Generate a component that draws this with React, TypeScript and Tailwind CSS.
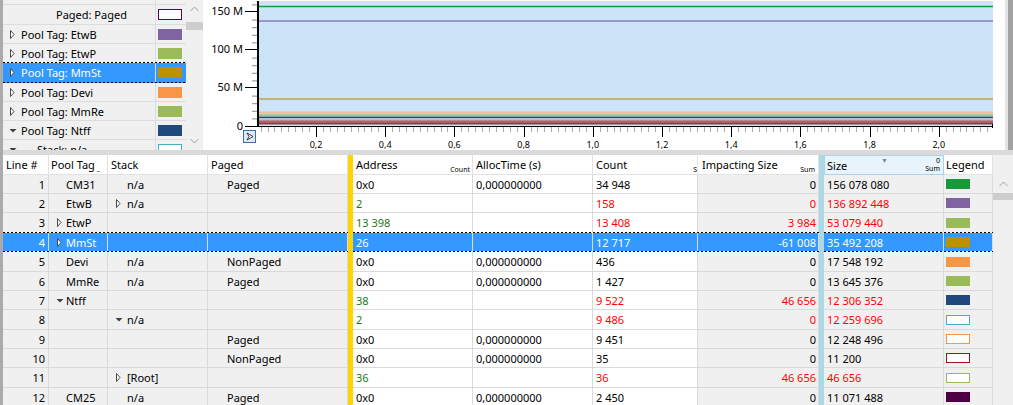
import React from 'react';

type Icon = 'c' | 'e' | undefined;

interface Row {
  n: number;
  h: 19 | 20;
  tag?: string;
  tagIcon?: Icon;
  stack?: string;
  stackIcon?: Icon;
  paged?: string;
  addr: string;
  addrG?: boolean;
  alloc?: string;
  count: string;
  countR?: boolean;
  imp: string;
  impR?: boolean;
  size: string;
  sizeR?: boolean;
  legend: string;
  outline?: boolean;
  sel?: boolean;
}

const rows: Row[] = [
  { n: 1, h: 19, tag: 'CM31', stack: 'n/a', paged: 'Paged', addr: '0x0', alloc: '0,000000000', count: '34 948', imp: '0', size: '156 078 080', legend: '#17993a' },
  { n: 2, h: 19, tag: 'EtwB', stack: 'n/a', stackIcon: 'c', addr: '2', addrG: true, count: '158', countR: true, imp: '0', impR: true, size: '136 892 448', sizeR: true, legend: '#8064a2' },
  { n: 3, h: 20, tag: 'EtwP', tagIcon: 'c', addr: '13 398', addrG: true, count: '13 408', countR: true, imp: '3 984', impR: true, size: '53 079 440', sizeR: true, legend: '#9bbb59' },
  { n: 4, h: 19, tag: 'MmSt', tagIcon: 'c', addr: '26', count: '12 717', imp: '-61 008', size: '35 492 208', legend: '#bf8f00', sel: true },
  { n: 5, h: 20, tag: 'Devi', stack: 'n/a', paged: 'NonPaged', addr: '0x0', alloc: '0,000000000', count: '436', imp: '0', size: '17 548 192', legend: '#f79646' },
  { n: 6, h: 19, tag: 'MmRe', stack: 'n/a', paged: 'Paged', addr: '0x0', alloc: '0,000000000', count: '1 427', imp: '0', size: '13 645 376', legend: '#9bbb59' },
  { n: 7, h: 19, tag: 'Ntff', tagIcon: 'e', addr: '38', addrG: true, count: '9 522', countR: true, imp: '46 656', impR: true, size: '12 306 352', sizeR: true, legend: '#1f497d' },
  { n: 8, h: 20, stack: 'n/a', stackIcon: 'e', addr: '2', addrG: true, count: '9 486', countR: true, imp: '0', impR: true, size: '12 259 696', sizeR: true, legend: '#4bacc6', outline: true },
  { n: 9, h: 19, paged: 'Paged', addr: '0x0', alloc: '0,000000000', count: '9 451', imp: '0', size: '12 248 496', legend: '#f79646', outline: true },
  { n: 10, h: 19, paged: 'NonPaged', addr: '0x0', alloc: '0,000000000', count: '35', imp: '0', size: '11 200', legend: '#a31515', outline: true },
  { n: 11, h: 20, stack: '[Root]', stackIcon: 'c', addr: '36', addrG: true, count: '36', countR: true, imp: '46 656', impR: true, size: '46 656', sizeR: true, legend: '#9bbb59', outline: true },
  { n: 12, h: 19, tag: 'CM25', stack: 'n/a', paged: 'Paged', addr: '0x0', alloc: '0,000000000', count: '2 450', imp: '0', size: '11 071 488', legend: '#4d0044' },
];

interface TreeRow {
  h: number;
  text?: string;
  icon?: Icon;
  pad?: string;
  sw?: string;
  outline?: boolean;
  sel?: boolean;
}

const treeRows: TreeRow[] = [
  { h: 5 },
  { h: 20, text: 'Paged: Paged', pad: 'pl-[50px]', sw: '#4d0a4d', outline: true },
  { h: 19, text: 'Pool Tag: EtwB', icon: 'c', sw: '#8064a2' },
  { h: 19, text: 'Pool Tag: EtwP', icon: 'c', sw: '#9bbb59' },
  { h: 20, text: 'Pool Tag: MmSt', icon: 'c', sw: '#bf8f00', sel: true },
  { h: 19, text: 'Pool Tag: Devi', icon: 'c', sw: '#f79646' },
  { h: 19, text: 'Pool Tag: MmRe', icon: 'c', sw: '#9bbb59' },
  { h: 19, text: 'Pool Tag: Ntff', icon: 'e', sw: '#1f497d' },
  { h: 19, text: 'Stack: n/a', icon: 'e', pad: 'pl-[6px]', sw: '#4bacc6', outline: true },
];

// little tree toggles
const Toggle = ({ kind }: { kind: Icon }) => (
  <span className="w-[9px] h-[9px] shrink-0 flex items-center">
    {kind === 'c' && (
      <svg width="9" height="9" viewBox="0 0 9 9">
        <path d="M1.5 0.5 L5 4.5 L1.5 8.5 Z" fill="#fff" stroke="#4a4a4a" strokeWidth="1" />
      </svg>
    )}
    {kind === 'e' && (
      <svg width="9" height="9" viewBox="0 0 9 9">
        <path d="M0.5 3 H7.5 L4 6.5 Z" fill="#404040" />
      </svg>
    )}
  </span>
);

const Dashed = () => <div className="h-px bg-[repeating-linear-gradient(90deg,#000_0_2px,transparent_2px_4px)]" />;

const Chevron = ({ up }: { up?: boolean }) => (
  <svg width="9" height="6" viewBox="0 0 9 6">
    <path d={up ? 'M0.5 5 L4.5 1 L8.5 5' : 'M0.5 1 L4.5 5 L8.5 1'} fill="none" stroke="#a0a0a0" strokeWidth="1" />
  </svg>
);

const Tree = () => (
  <div className="w-[183px] h-[150px] overflow-hidden bg-[#f0f0f0]">
    {treeRows.map((r, i) => {
      const nextSel = treeRows[i + 1]?.sel;
      return (
        <div key={i} className={r.sel ? 'bg-[#3399ff] text-white' : ''}>
          <div className="flex" style={{ height: r.h - 1 }}>
            <div className={`w-[153px] border-r border-[#dcdcdc] flex items-center ${r.pad ?? 'pl-[6px]'}`}>
              {r.icon && <Toggle kind={r.icon} />}
              {r.text && <span className={`${r.icon === 'e' && r.text.startsWith('Stack') ? 'ml-[19px]' : 'ml-[3px]'} whitespace-nowrap`}>{r.text}</span>}
            </div>
            <div className="w-[30px] flex items-center pl-[2px]">
              {r.sw && (
                <div
                  className={`w-[24px] h-[11px] ${r.outline ? 'border border-current bg-white' : ''}`}
                  style={r.outline ? { color: r.sw } : { background: r.sw }}
                />
              )}
            </div>
          </div>
          {r.sel || nextSel ? <Dashed /> : <div className="h-px bg-[#dcdcdc]" />}
        </div>
      );
    })}
  </div>
);

const chartLines = [
  { y: 6.5, c: '#179a37', w: 1.5 },
  { y: 21, c: '#8a7fb5', w: 1.5 },
  { y: 99, c: '#c4a24e', w: 1.5 },
  { y: 112.5, c: '#f1b994', w: 2 },
  { y: 114.5, c: '#a7c98f', w: 1 },
  { y: 116, c: '#6f94ad', w: 1 },
  { y: 117.3, c: '#2b4a78', w: 1.2 },
  { y: 119, c: '#9f93c7', w: 1 },
  { y: 120.5, c: '#c08888', w: 1 },
  { y: 122, c: '#9a3a3a', w: 1.5 },
  { y: 123.7, c: '#86403f', w: 1.5 },
];

const Chart = () => {
  const yMinor: number[] = [];
  for (let k = 1; k <= 16; k++) if (k % 5 !== 0) yMinor.push(126 - 7.6 * k);
  const xTicks: { x: number; major: boolean }[] = [];
  for (let k = -8; k <= 97; k++) xTicks.push({ x: 316 + 6.92 * k, major: k % 10 === 0 });
  const labels = ['0,2', '0,4', '0,6', '0,8', '1,0', '1,2', '1,4', '1,6', '1,8', '2,0'];
  return (
    <svg width="802" height="150" viewBox="203 0 802 150" className="bg-white shrink-0 block">
      <rect x="259" y="1" width="734" height="125" fill="#cce4f7" />
      {chartLines.map((l, i) => (
        <line key={i} x1="259" x2="993" y1={l.y} y2={l.y} stroke={l.c} strokeWidth={l.w} />
      ))}
      {yMinor.map((y, i) => (
        <line key={i} x1="252" x2="257" y1={y + 0.5} y2={y + 0.5} stroke="#8c8c8c" />
      ))}
      {[11, 49, 87, 126].map((y) => (
        <line key={y} x1="245" x2="258" y1={y + 0.5} y2={y + 0.5} stroke="#000" />
      ))}
      {xTicks
        .filter((t) => t.x > 259 && t.x < 993)
        .map((t, i) => (
          <line
            key={i}
            x1={Math.round(t.x) + 0.5}
            x2={Math.round(t.x) + 0.5}
            y1="127"
            y2={t.major ? 137 : 132}
            stroke={t.major ? '#000' : '#a8a8a8'}
          />
        ))}
      <line x1="258" x2="258" y1="1" y2="127" stroke="#000" strokeWidth="2" />
      <line x1="258" x2="993" y1="126.5" y2="126.5" stroke="#000" />
      <line x1="992.5" x2="992.5" y1="124" y2="128" stroke="#000" />
      <g fontSize="11" fill="#000" textAnchor="end">
        <text x="243" y="15">150 M</text>
        <text x="243" y="53">100 M</text>
        <text x="243" y="91">50 M</text>
        <text x="243" y="130">0</text>
      </g>
      <g fontSize="9" fill="#000" textAnchor="middle">
        {labels.map((l, i) => (
          <text key={l} x={316 + 69.2 * i} y="148">
            {l}
          </text>
        ))}
      </g>
      <rect x="243.5" y="130.5" width="12" height="12" fill="#dfeaf6" stroke="#3a6ea5" />
      <path d="M247 133 L253 136.5 L247 140 L249 136.5 Z" fill="#fff" stroke="#222" strokeWidth="0.9" />
    </svg>
  );
};

const Swatch = ({ c, outline }: { c: string; outline?: boolean }) => (
  <div
    className={`w-[24px] h-[10px] ${outline ? 'border border-current bg-white' : ''}`}
    style={outline ? { color: c } : { background: c }}
  />
);

const Header = () => (
  <div className="flex h-[20px] bg-white">
    <div className="w-[46px] border-r border-b border-[#e2e2e2] pl-[3px] flex items-center">Line #</div>
    <div className="w-[59px] border-r border-b border-[#e2e2e2] pl-[2px] flex items-center whitespace-nowrap">
      Pool Tag<span className="text-[7px] self-end mb-[2px] ml-[2px]">_</span>
    </div>
    <div className="w-[100px] border-r border-b border-[#e2e2e2] pl-[3px] flex items-center">Stack</div>
    <div className="w-[140px] border-r border-b border-[#e2e2e2] pl-[3px] flex items-center">Paged</div>
    <div className="w-[5px] bg-[#ffd400]" />
    <div className="w-[120px] border-r border-b border-[#e2e2e2] pl-[3px] flex items-center justify-between">
      <span>Address</span>
      <span className="text-[7px] self-end mb-[1px] mr-[2px]">Count</span>
    </div>
    <div className="w-[120px] border-r border-b border-[#e2e2e2] pl-[3px] flex items-center">AllocTime (s)</div>
    <div className="w-[105px] border-r border-b border-[#e2e2e2] pl-[3px] flex items-center justify-between overflow-hidden">
      <span>Count</span>
      <span className="text-[7px] self-end mb-[1px] -mr-[11px]">Sum</span>
    </div>
    <div className="w-[121px] border-r border-b border-[#e2e2e2] pl-[4px] flex items-center justify-between">
      <span className="whitespace-nowrap">Impacting Size</span>
      <span className="text-[7px] self-end mb-[1px] mr-[3px]">Sum</span>
    </div>
    <div className="w-[5px] bg-[#add8e6]" />
    <div className="w-[120px] border border-[#a9d3f0] bg-[#e8f4fc] pl-[2px] flex items-center justify-between relative">
      <span>Size</span>
      <span className="absolute left-[56px] top-[1px] text-[7px] text-[#888]">▼</span>
      <span className="flex flex-col items-end text-[7px] leading-[8px] mr-[3px]">
        <span>0</span>
        <span>Sum</span>
      </span>
    </div>
    <div className="w-[49px] border-r border-b border-[#e2e2e2] pl-[2px] flex items-center">Legend</div>
  </div>
);

const TableRow = ({ r, nextSel }: { r: Row; nextSel: boolean }) => {
  const sel = !!r.sel;
  const gray = sel ? 'bg-[#3399ff]' : 'bg-[#f0f0f0]';
  const white = sel ? 'bg-[#3399ff]' : 'bg-white';
  const red = sel ? '' : 'text-[#ff0000]';
  const green = sel ? '' : 'text-[#1a7a1a]';
  const line = 'border-r border-[#dadada]';
  return (
    <div className={sel ? 'text-white' : 'text-black'}>
      <div className={`flex ${r.h === 20 ? 'h-[19px]' : 'h-[18px]'}`}>
        <div className={`w-[46px] ${line} ${gray} pr-[3px] flex items-center justify-end`}>{r.n}</div>
        <div className={`w-[59px] ${line} ${gray} pl-[7px] flex items-center`}>
          <Toggle kind={r.tagIcon} />
          <span className="ml-[1px]">{r.tag}</span>
        </div>
        <div className={`w-[100px] ${line} ${gray} pl-[7px] flex items-center`}>
          <Toggle kind={r.stackIcon} />
          <span className="ml-[3px]">{r.stack}</span>
        </div>
        <div className={`w-[140px] ${line} ${gray} pl-[19px] flex items-center`}>{r.paged}</div>
        <div className="w-[5px] bg-[#ffd400]" />
        <div className={`w-[120px] ${line} ${white} pl-[3px] flex items-center ${r.addrG ? green : ''}`}>{r.addr}</div>
        <div className={`w-[120px] ${line} ${white} pl-[3px] flex items-center`}>{r.alloc}</div>
        <div className={`w-[105px] ${line} ${white} pl-[3px] flex items-center ${r.countR ? red : ''}`}>{r.count}</div>
        <div className={`w-[121px] ${line} ${gray} pr-[2px] flex items-center justify-end ${r.impR ? red : ''}`}>{r.imp}</div>
        <div className="w-[5px] bg-[#add8e6]" />
        <div className={`w-[120px] ${line} ${gray} pl-[3px] flex items-center ${r.sizeR ? red : ''}`}>{r.size}</div>
        <div className={`w-[49px] ${line} ${gray} pl-[2px] flex items-center`}>
          <Swatch c={r.legend} outline={r.outline} />
        </div>
      </div>
      {sel || nextSel ? (
        <div className="flex">
          <div className="w-[345px]"><Dashed /></div>
          <div className="w-[5px] h-px bg-[#ffd400]" />
          <div className="w-[466px]"><Dashed /></div>
          <div className="w-[5px] h-px bg-[#add8e6]" />
          <div className="w-[169px]"><Dashed /></div>
        </div>
      ) : (
        <div className="flex h-px">
          <div className="w-[345px] bg-[#dadada]" />
          <div className="w-[5px] bg-[#ffd400]" />
          <div className="w-[466px] bg-[#dadada]" />
          <div className="w-[5px] bg-[#add8e6]" />
          <div className="w-[169px] bg-[#dadada]" />
        </div>
      )}
    </div>
  );
};

export default function App() {
  return (
    <div className="w-[1013px] h-[405px] overflow-hidden flex bg-[#f0f0f0] text-[11px] text-black font-['Noto_Sans',sans-serif] leading-none">
      <div className="w-[3px] shrink-0 bg-[#ababab]" />
      <div className="flex-1 flex flex-col min-w-0">
        {/* top: tree legend + chart */}
        <div className="h-[150px] flex shrink-0">
          <Tree />
          <div className="w-[17px] bg-[#f0f0f0] flex flex-col items-center">
            <div className="h-[18px] flex items-center"><Chevron up /></div>
            <div className="w-full h-[8px] bg-[#cdcdcd] mt-[4px]" />
            <div className="flex-1" />
            <div className="h-[18px] flex items-center"><Chevron /></div>
          </div>
          <Chart />
          <div className="w-[3px] bg-[#e3e3e3]" />
          <div className="flex-1 bg-[#a3a3a3]" />
        </div>
        <div className="h-[5px] shrink-0 bg-[#dadada]" />
        {/* table */}
        <div className="flex-1 flex min-h-0">
          <div className="w-[990px] overflow-hidden">
            <Header />
            {rows.map((r, i) => (
              <TableRow key={r.n} r={r} nextSel={!!rows[i + 1]?.sel} />
            ))}
          </div>
          <div className="flex-1 flex flex-col items-center">
            <div className="h-[20px]" />
            <div className="h-[18px] flex items-center"><Chevron up /></div>
            <div className="w-full h-[7px] bg-[#cdcdcd]" />
          </div>
        </div>
      </div>
    </div>
  );
}
